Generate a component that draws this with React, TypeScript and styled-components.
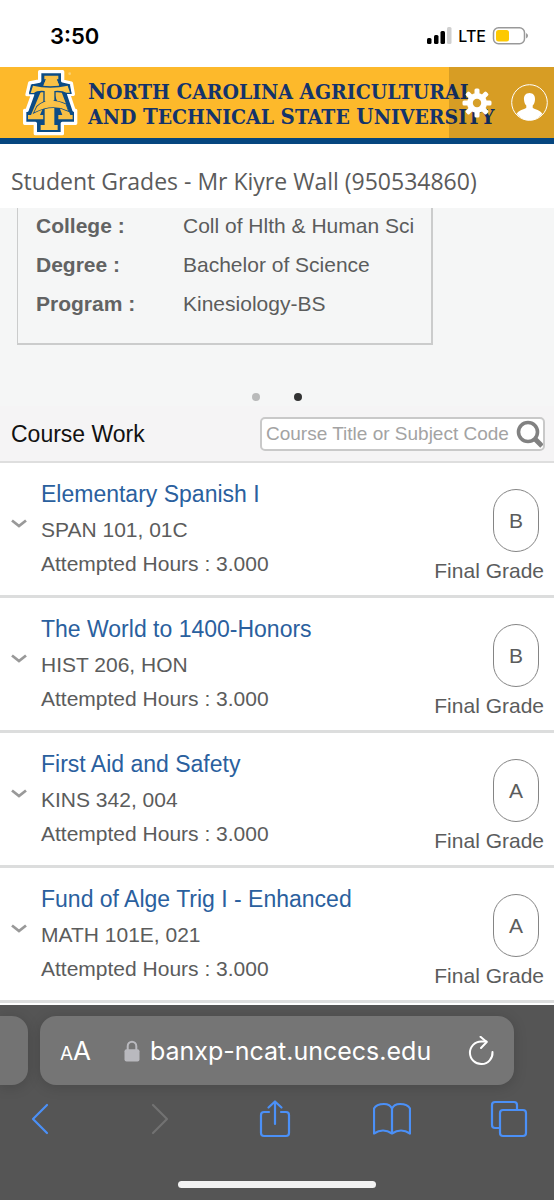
import React from "react";
import styled, { createGlobalStyle } from "styled-components";

const GlobalStyle = createGlobalStyle`
  *, *::before, *::after { box-sizing: border-box; }
  body {
    margin: 0;
    background: #fff;
    color: #5b5c5c;
    font-family: "Liberation Sans", Arial, sans-serif;
    font-size: 22px;
  }
  button {
    display: flex;
    align-items: center;
    justify-content: center;
    padding: 0;
    border: 0;
    background: none;
    color: inherit;
    font: inherit;
    cursor: pointer;
  }
  svg { display: block; flex: none; }
  h1, h2, h3, p, ul, dl, dd { margin: 0; padding: 0; }
`;

const Page = styled.div`
  display: flex;
  flex-direction: column;
  min-height: 100vh;
`;

const StatusBar = styled.div`
  display: flex;
  align-items: center;
  justify-content: space-between;
  height: 67px;
  padding: 4px 26px 0 50px;
  color: #000;
  font-family: Inter, sans-serif;
`;

const Clock = styled.time`
  font-size: 22px;
  font-weight: 600;
`;

const StatusIcons = styled.div`
  display: flex;
  align-items: center;
  gap: 6px;
  font-size: 16px;
  font-weight: 500;
`;

const Banner = styled.header`
  position: relative;
  display: flex;
  align-items: center;
  gap: 10px;
  height: 77px;
  padding-left: 23px;
  overflow: hidden;
  border-bottom: 6px solid #06467f;
  background: #fdb92b;
`;

const University = styled.p`
  padding-top: 3px;
  color: #14336b;
  font-family: "DejaVu Serif Condensed", "DejaVu Serif", serif;
  font-stretch: condensed;
  font-size: 21px;
  font-weight: 700;
  line-height: 24px;
  text-transform: uppercase;
  white-space: nowrap;
`;

const Capital = styled.span`
  font-size: 22px;
`;

const BannerTools = styled.div`
  position: absolute;
  inset: 0 0 0 auto;
  display: flex;
  align-items: center;
  justify-content: space-between;
  width: 105px;
  padding: 0 6px 0 13px;
  background: rgba(0, 0, 0, 0.15);
  color: #fff;
`;

const PageTitle = styled.h1`
  padding: 21px 11px 11px;
  color: #5b5b5b;
  font-family: "Open Sans", sans-serif;
  font-size: 23px;
  font-weight: 400;
  line-height: 32px;
  white-space: nowrap;
`;

const Summary = styled.section`
  padding: 0 17px 5px;
  background: #f5f6f6;
`;

const SummaryCard = styled.dl`
  display: grid;
  grid-template-columns: 147px 1fr;
  row-gap: 4px;
  width: 80%;
  padding: 0 17px 22px 18px;
  border: solid #cbcccc;
  border-width: 0 2px 2px 1px;
  font-size: 21px;
  line-height: 35px;
  white-space: nowrap;
`;

const Term = styled.dt`
  color: #626363;
  font-weight: 700;
`;

const Pager = styled.div`
  display: flex;
  justify-content: center;
  gap: 34px;
  padding: 48px 0 0;
`;

const PagerDot = styled.button<{ $current?: boolean }>`
  width: 8px;
  height: 8px;
  border-radius: 50%;
  background: ${(p) => (p.$current ? "#333" : "#b9baba")};
`;

const CourseBar = styled.div`
  display: flex;
  align-items: center;
  justify-content: space-between;
  gap: 16px;
  height: 57px;
  padding: 1px 9px 0 11px;
  border-bottom: 2px solid #dedede;
  background: #f5f4f5;
`;

const CourseHeading = styled.h2`
  color: #111;
  font-size: 23px;
  font-weight: 400;
  white-space: nowrap;
`;

const SearchBox = styled.label`
  display: flex;
  align-items: center;
  width: 285px;
  height: 34px;
  padding-left: 4px;
  border: 2px solid #c9c9c9;
  border-radius: 5px;
  background: #fff;
  color: #818181;
`;

const SearchInput = styled.input`
  flex: 1;
  min-width: 0;
  padding: 0;
  border: 0;
  outline: 0;
  background: none;
  color: #333;
  font: inherit;
  font-size: 19px;
  &::placeholder { color: #a3a3a3; opacity: 1; }
`;

const CourseList = styled.ul`
  flex: 1;
  list-style: none;
`;

const CourseRow = styled.li`
  display: flex;
  height: 135px;
  padding: 13px 10px 0 10px;
  border-bottom: 3px solid #dcdddd;
`;

const Expand = styled.button`
  width: 18px;
  height: 95px;
  color: #999;
`;

const CourseInfo = styled.div`
  flex: 1;
  padding-left: 13px;
  font-size: 21px;
  line-height: 34px;
`;

const CourseLink = styled.a`
  display: block;
  color: #2a609e;
  font-size: 23px;
  line-height: 37px;
  text-decoration: none;
`;

const GradeColumn = styled.div`
  display: flex;
  flex-direction: column;
  align-items: flex-end;
  padding-top: 13px;
  font-size: 21px;
  line-height: 38px;
`;

const Grade = styled.span`
  display: flex;
  align-items: center;
  justify-content: center;
  width: 46px;
  height: 63px;
  margin-right: 5px;
  border: 1px solid #858585;
  border-radius: 23px;
`;

const BrowserBar = styled.footer`
  display: flex;
  flex-direction: column;
  align-items: center;
  padding: 11px 0 12px;
  border-top: 2px solid #fff;
  background: #555;
  color: #fff;
`;

const TabStrip = styled.div`
  display: flex;
  align-self: stretch;
  gap: 12px;
  height: 69px;
  padding-right: 40px;
`;

const PreviousTab = styled.div`
  width: 28px;
  border-radius: 0 16px 16px 0;
  background: #737373;
  box-shadow: 0 2px 14px rgba(0, 0, 0, 0.16);
`;

const AddressBar = styled.div`
  display: flex;
  flex: 1;
  align-items: center;
  justify-content: space-between;
  padding: 0 20px;
  border-radius: 16px;
  background: #757575;
  box-shadow: 0 2px 14px rgba(0, 0, 0, 0.16);
  font-family: Inter, sans-serif;
`;

const TextSize = styled.button`
  align-items: baseline;
  font-size: 26px;
  small { font-size: 19px; }
`;

const Address = styled.span`
  display: flex;
  align-items: center;
  gap: 10px;
  padding-right: 4px;
  font-size: 25px;
  white-space: nowrap;
`;

const Toolbar = styled.nav`
  display: flex;
  align-self: stretch;
  justify-content: space-between;
  padding: 13px 25px 0 20px;
  color: #4b90f7;
`;

const ToolButton = styled.button`
  width: 40px;
  height: 42px;
  &:disabled { color: #727272; }
`;

const HomeIndicator = styled.div`
  width: 198px;
  height: 7px;
  margin-top: 41px;
  border-radius: 4px;
  background: #f2f2f2;
`;

const courses = [
  { title: "Elementary Spanish I", code: "SPAN 101, 01C", hours: "3.000", grade: "B" },
  { title: "The World to 1400-Honors", code: "HIST 206, HON", hours: "3.000", grade: "B" },
  { title: "First Aid and Safety", code: "KINS 342, 004", hours: "3.000", grade: "A" },
  { title: "Fund of Alge Trig I - Enhanced", code: "MATH 101E, 021", hours: "3.000", grade: "A" },
];

const Signal = () => (
  <svg width="25" height="17" viewBox="0 0 25 17">
    <rect x="0" y="11" width="4.500" height="6" rx="1.500" />
    <rect x="7" y="8" width="4.500" height="9" rx="1.500" />
    <rect x="13.500" y="4" width="4.500" height="13" rx="1.500" />
    <rect x="20" y="0" width="4.500" height="17" rx="1.500" fill="#d0d0d0" />
  </svg>
);

const Battery = () => (
  <svg width="36" height="18" viewBox="0 0 36 18">
    <rect x="1.500" y="0.800" width="31" height="16" rx="5" fill="none" stroke="#999" strokeWidth="1.500" />
    <rect x="4" y="3" width="13" height="11.500" rx="2.500" fill="#fdc902" />
    <path d="M34.200 6v5.500q1.700-1 1.700-2.700T34.200 6Z" fill="#888" />
  </svg>
);

const Logo = () => (
  <svg width="55" height="68" viewBox="0 0 165 204" aria-label="A&T logo" role="img">
    <path
      d="M50 8H119V36L145 42L151 76H137L153 124H158V163H118V194H37V163H5V124H12L29 77H12L20 42L50 36Z"
      fill="#0b4c86" stroke="#fff" strokeWidth="10" strokeLinejoin="round"
    />
    <path d="M64 20H106V31H101L142 138H149V151H106V138H118L87 56L51 138H62V151H15V138H24L69 31H64Z" fill="#f7bf45" />
    <path
      d="M30 50Q82 62 134 50L141 71H130Q118 64 94 66V168H104V183H53V168H65V66Q42 64 33 72H23Z"
      fill="#fcc84c" stroke="#0b4c86" strokeWidth="8" paintOrder="stroke"
    />
    <path d="M62 48L72 24H98L108 48Q84 52 62 48Z" fill="#f9c146" />
    <path
      d="M42 113Q74 82 128 106L135 125Q88 102 34 130Z"
      fill="#f9c146" stroke="#0b4c86" strokeWidth="5" paintOrder="stroke"
    />
    <path d="M67 93H92V107Q80 107 67 111Z" fill="#fbc54a" />
    <circle cx="140" cy="14" r="4" fill="#fcd16f" />
  </svg>
);

const Gear = () => (
  <svg width="30" height="30" viewBox="-15 -15 30 30" fill="currentColor">
    {[0, 45, 90, 135].map((angle) => (
      <rect key={angle} x="-2.500" y="-14.500" width="5" height="29" rx="1.500" transform={`rotate(${angle})`} />
    ))}
    <circle r="10" />
    <circle r="4.200" fill="#d7a029" />
  </svg>
);

const Profile = () => (
  <svg width="37" height="37" viewBox="0 0 37 37">
    <circle cx="18.500" cy="18.500" r="17.800" fill="none" stroke="#fff" strokeWidth="1" />
    <path
      d="M18.500 9c3.800 0 5.800 2.800 5.500 6.700-.2 2.600-1 4.600-2.300 5.800v2.200c2.500 2 7.500 2.300 9.600 6C28 34 23.500 36.300 18.500 36.300S9 34 5.700 29.700c2.100-3.700 7.100-4 9.600-6v-2.200c-1.300-1.200-2.100-3.200-2.300-5.800C12.700 11.800 14.700 9 18.500 9Z"
      fill="#fff"
    />
  </svg>
);

const SearchIcon = () => (
  <svg width="28" height="28" viewBox="0 0 28 28" fill="none" stroke="currentColor">
    <circle cx="13" cy="12" r="9.500" strokeWidth="3.600" />
    <path d="M20 19l7 7" strokeWidth="5" />
  </svg>
);

const ChevronDown = () => (
  <svg width="16" height="10" viewBox="0 0 16 10" fill="none" stroke="currentColor" strokeWidth="2.800">
    <path d="M1 1.500l7 5.500 7-5.500" />
  </svg>
);

const Lock = () => (
  <svg width="16" height="22" viewBox="0 0 16 22">
    <path d="M3.700 10V6.200a4.300 4.500 0 0 1 8.600 0V10" fill="none" stroke="#b9b9be" strokeWidth="2" />
    <rect x="0.500" y="9.300" width="15" height="12.200" rx="2" fill="#b9b9be" />
  </svg>
);

const Reload = () => (
  <svg width="26" height="30" viewBox="0 0 26 30" fill="none" stroke="currentColor" strokeWidth="2" strokeLinecap="round" strokeLinejoin="round">
    <path d="M24.500 16A11.300 11.300 0 1 1 13.200 5.500H18.500" />
    <path d="M12.500 0.800l6.200 5.200-5.700 6" />
  </svg>
);

const ToolIcon = ({ d }: { d: string }) => (
  <svg width="38" height="38" viewBox="0 0 38 38" fill="none" stroke="currentColor" strokeWidth="2.200" strokeLinecap="round" strokeLinejoin="round">
    <path d={d} />
  </svg>
);

export default function App() {
  return (
    <>
      <GlobalStyle />
      <Page>
        <StatusBar>
          <Clock>3:50</Clock>
          <StatusIcons>
            <Signal />
            <span>LTE</span>
            <Battery />
          </StatusIcons>
        </StatusBar>

        <Banner>
          <Logo />
          <University>
            <Capital>N</Capital>orth <Capital>C</Capital>arolina <Capital>A</Capital>gricultural
            <br />
            and <Capital>T</Capital>echnical <Capital>S</Capital>tate <Capital>U</Capital>niversity
          </University>
          <BannerTools>
            <button aria-label="Settings"><Gear /></button>
            <button aria-label="Profile"><Profile /></button>
          </BannerTools>
        </Banner>

        <PageTitle>Student Grades - Mr Kiyre Wall (950534860)</PageTitle>

        <Summary>
          <SummaryCard>
            <Term>College :</Term>
            <dd>Coll of Hlth &amp; Human Sci</dd>
            <Term>Degree :</Term>
            <dd>Bachelor of Science</dd>
            <Term>Program :</Term>
            <dd>Kinesiology-BS</dd>
          </SummaryCard>
          <Pager>
            <PagerDot aria-label="First slide" />
            <PagerDot aria-label="Second slide" $current />
          </Pager>
        </Summary>

        <CourseBar>
          <CourseHeading>Course Work</CourseHeading>
          <SearchBox>
            <SearchInput type="text" aria-label="Search courses" placeholder="Course Title or Subject Code" />
            <SearchIcon />
          </SearchBox>
        </CourseBar>

        <CourseList>
          {courses.map((course) => (
            <CourseRow key={course.code}>
              <Expand aria-label={`Expand ${course.title}`}><ChevronDown /></Expand>
              <CourseInfo>
                <CourseLink href="#">{course.title}</CourseLink>
                <p>{course.code}</p>
                <p>Attempted Hours : {course.hours}</p>
              </CourseInfo>
              <GradeColumn>
                <Grade>{course.grade}</Grade>
                <span>Final Grade</span>
              </GradeColumn>
            </CourseRow>
          ))}
        </CourseList>

        <BrowserBar>
          <TabStrip>
            <PreviousTab />
            <AddressBar>
              <TextSize aria-label="Text size"><small>A</small>A</TextSize>
              <Address>
                <Lock />
                banxp-ncat.uncecs.edu
              </Address>
              <button aria-label="Reload"><Reload /></button>
            </AddressBar>
          </TabStrip>
          <Toolbar>
            <ToolButton aria-label="Back"><ToolIcon d="M26 5L12 19L26 33" /></ToolButton>
            <ToolButton aria-label="Forward" disabled><ToolIcon d="M15 5L29 19L15 33" /></ToolButton>
            <ToolButton aria-label="Share">
              <ToolIcon d="M13 12H8Q5 12 5 15V33Q5 36 8 36H30Q33 36 33 33V15Q33 12 30 12H25M19 24V2M12.500 7.500L19 1.500L25.500 7.500" />
            </ToolButton>
            <ToolButton aria-label="Bookmarks">
              <ToolIcon d="M19 8.500Q17 4 11 4Q3.500 4 1 8.500V33.500Q10 27.500 19 33.500Q28 27.500 37 33.500V8.500Q34.500 4 27 4Q21 4 19 8.500V33.500" />
            </ToolButton>
            <ToolButton aria-label="Tabs">
              <ToolIcon d="M9 28H5Q2 28 2 25V5Q2 2 5 2H24Q27 2 27 5V10M13 10H33Q36 10 36 13V33Q36 36 33 36H13Q10 36 10 33V13Q10 10 13 10Z" />
            </ToolButton>
          </Toolbar>
          <HomeIndicator />
        </BrowserBar>
      </Page>
    </>
  );
}
